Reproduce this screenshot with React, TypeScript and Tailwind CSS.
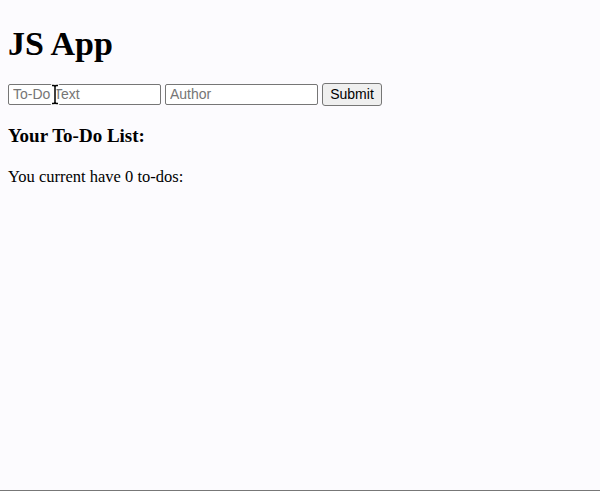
export default function App() {
  return (
    <div className="relative h-[491px] overflow-hidden bg-[#fcfbfe] font-['Liberation_Serif',serif] text-black">
      <div className="px-2">
        <h1 className="mt-[25px] mb-[20px] text-[34px] font-bold leading-[38px]">JS App</h1>

        <form className="flex h-[23px] items-center gap-1" onSubmit={(e) => e.preventDefault()}>
          <input
            placeholder="To-Do Text"
            className="h-[21px] w-[153px] rounded-[2px] border border-[#767676] bg-white px-[4px] font-['Liberation_Sans',sans-serif] text-[14px] placeholder:text-[#757575]"
          />
          <input
            placeholder="Author"
            className="h-[21px] w-[153px] rounded-[2px] border border-[#767676] bg-white px-[4px] font-['Liberation_Sans',sans-serif] text-[14px] placeholder:text-[#757575]"
          />
          <button className="h-[23px] w-[60px] rounded-[3px] border border-[#767676] bg-[#efefef] font-['Liberation_Sans',sans-serif] text-[14px]">
            Submit
          </button>
        </form>

        <h3 className="mt-[19px] text-[19px] font-bold leading-[22px]">Your To-Do List:</h3>
        <p className="mt-[20px] text-[16.5px] leading-[19px]">You current have 0 to-dos:</p>
      </div>

      {/* text cursor over the first input */}
      <svg className="absolute left-[50px] top-[84px]" width="10" height="21" viewBox="0 0 10 21">
        <path
          d="M2 1.5h1.5q1.5 0 1.5 1.5q0-1.5 1.5-1.5H8M5 3v15M2 19.5h1.5q1.5 0 1.5-1.5q0 1.5 1.5 1.5H8"
          fill="none"
          stroke="white"
          strokeWidth="3"
          strokeLinecap="round"
        />
        <path
          d="M2 1.5h1.5q1.5 0 1.5 1.5q0-1.5 1.5-1.5H8M5 3v15M2 19.5h1.5q1.5 0 1.5-1.5q0 1.5 1.5 1.5H8"
          fill="none"
          stroke="black"
          strokeWidth="1.5"
        />
      </svg>

      <div className="absolute inset-x-0 bottom-0 h-px bg-[#777]" />
    </div>
  );
}
